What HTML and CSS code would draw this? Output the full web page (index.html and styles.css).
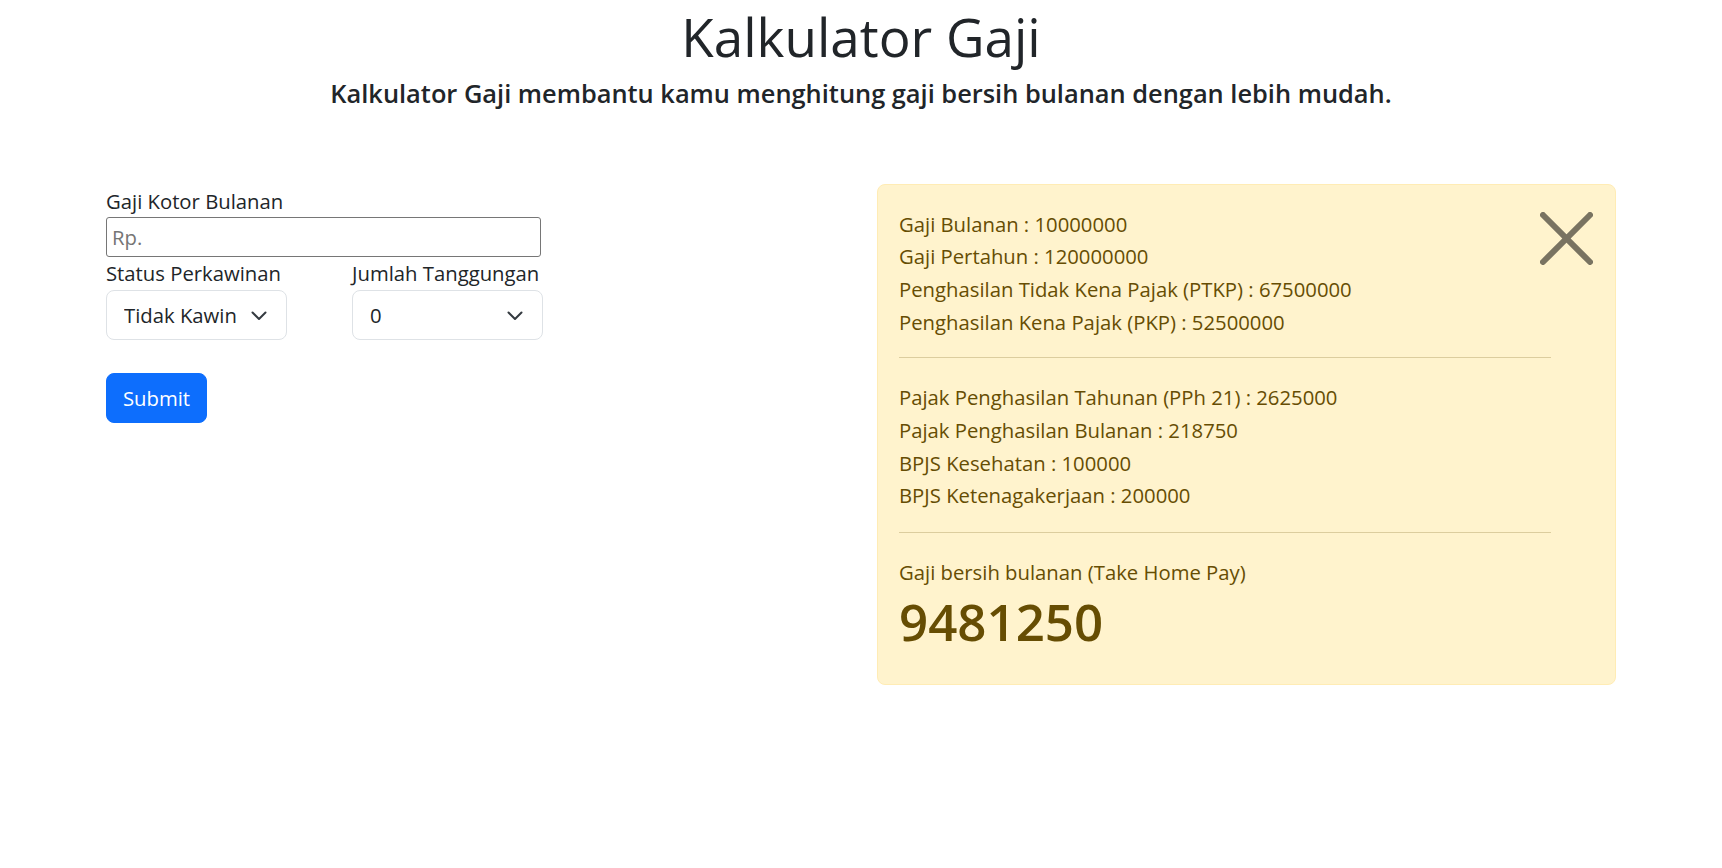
FILE: index.html
```html
<!DOCTYPE html>
<html lang="id">
<head>
<meta charset="utf-8">
<title>Kalkulator Gaji</title>
<link rel="stylesheet" href="styles.css">
</head>
<body>
  <header class="header">
    <h1 class="title">Kalkulator Gaji</h1>
    <h5 class="subtitle">Kalkulator Gaji membantu kamu menghitung gaji bersih bulanan dengan lebih mudah.</h5>
  </header>

  <main class="container">
    <section class="form-col">
      <form class="calc-form">
        <label class="label label-first" for="gaji">Gaji Kotor Bulanan</label>
        <input class="input" id="gaji" type="text" placeholder="Rp.">
        <div class="select-row">
          <div class="field field-status">
            <label class="label" for="status">Status Perkawinan</label>
            <div class="select-wrap">
              <select class="select" id="status">
                <option>Tidak Kawin</option>
                <option>Kawin</option>
              </select>
              <svg class="chevron" width="16" height="10" viewBox="0 0 16 10"><polyline points="1.5,1.5 8,8 14.5,1.5" fill="none" stroke="#343a40" stroke-width="2" stroke-linecap="round" stroke-linejoin="round"/></svg>
            </div>
          </div>
          <div class="field field-tanggungan">
            <label class="label" for="tanggungan">Jumlah Tanggungan</label>
            <div class="select-wrap">
              <select class="select" id="tanggungan">
                <option>0</option>
                <option>1</option>
                <option>2</option>
                <option>3</option>
              </select>
              <svg class="chevron" width="16" height="10" viewBox="0 0 16 10"><polyline points="1.5,1.5 8,8 14.5,1.5" fill="none" stroke="#343a40" stroke-width="2" stroke-linecap="round" stroke-linejoin="round"/></svg>
            </div>
          </div>
        </div>
        <button class="btn-submit" type="button">Submit</button>
      </form>
    </section>

    <section class="result-col">
      <div class="alert">
        <div class="line">Gaji Bulanan : 10000000</div>
        <div class="line">Gaji Pertahun : 120000000</div>
        <div class="line">Penghasilan Tidak Kena Pajak (PTKP) : 67500000</div>
        <div class="line">Penghasilan Kena Pajak (PKP) : 52500000</div>
        <hr class="divider">
        <div class="line">Pajak Penghasilan Tahunan (PPh 21) : 2625000</div>
        <div class="line">Pajak Penghasilan Bulanan : 218750</div>
        <div class="line">BPJS Kesehatan : 100000</div>
        <div class="line">BPJS Ketenagakerjaan : 200000</div>
        <hr class="divider divider-2">
        <div class="line">Gaji bersih bulanan (Take Home Pay)</div>
        <div class="total">9481250</div>
        <button class="btn-close" type="button" aria-label="Close">
          <svg width="53" height="53" viewBox="0 0 53 53"><path d="M3 3 L50 50 M50 3 L3 50" stroke="#000" stroke-width="6" stroke-linecap="round"/></svg>
        </button>
      </div>
    </section>
  </main>
</body>
</html>
```

FILE: styles.css
```css
* {
  box-sizing: border-box;
}

html, body {
  margin: 0;
  padding: 0;
  background: #ffffff;
}

body {
  font-family: "Open Sans", "Noto Sans", sans-serif;
  font-size: 20.3px;
  line-height: 32.7px;
  color: #212529;
}

.header {
  text-align: center;
}

.title {
  margin: 0;
  font-size: 53px;
  font-weight: 500;
  line-height: 73px;
  color: #212529;
}

.subtitle {
  margin: 5px 0 0;
  font-size: 25.4px;
  font-weight: 600;
  line-height: 30.5px;
  color: #212529;
}

.container {
  width: 1510px;
  margin: 75px auto 0;
  display: grid;
  grid-template-columns: 739px 739px;
  column-gap: 32px;
  align-items: start;
}

.form-col {
  padding-top: 2px;
}

.calc-form {
  display: flex;
  flex-direction: column;
  align-items: flex-start;
}

.label {
  display: block;
  line-height: 33px;
  color: #212529;
}

.label-first {
  line-height: 31px;
}

.input {
  width: 435px;
  height: 40px;
  border: 1px solid #767676;
  border-radius: 3px;
  padding: 0 5px;
  font-family: inherit;
  font-size: 20.3px;
  color: #212529;
  background: #fff;
}

.input::placeholder {
  color: #757575;
}

.select-row {
  display: flex;
  gap: 65px;
}

.field-status .select {
  width: 181px;
}

.field-tanggungan .select {
  width: 191px;
}

.select-wrap {
  position: relative;
}

.select {
  appearance: none;
  -webkit-appearance: none;
  display: block;
  height: 50px;
  padding: 0 40px 0 17px;
  border: 1px solid #dee2e6;
  border-radius: 8px;
  background: #fff;
  font-family: inherit;
  font-size: 20.3px;
  color: #212529;
}

.chevron {
  position: absolute;
  right: 20px;
  top: 21px;
  pointer-events: none;
}

.btn-submit {
  margin-top: 33px;
  width: 101px;
  height: 50px;
  border: 1px solid #0d6efd;
  border-radius: 8px;
  background: #0d6efd;
  color: #fff;
  font-family: inherit;
  font-size: 20.3px;
  padding: 0;
}

.alert {
  position: relative;
  height: 501px;
  background: #fff3cd;
  border: 1px solid #ffecb5;
  border-radius: 8px;
  padding: 23px 64px 0 21px;
  color: #664d03;
}

.line {
  line-height: 32.7px;
}

.divider {
  margin: 19px 0 23px;
  border: 0;
  height: 1px;
  background: #dccd9e;
}

.divider-2 {
  margin-top: 20px;
}

.total {
  margin-top: 2px;
  font-size: 51px;
  font-weight: 600;
  line-height: 60px;
  color: #664d03;
}

.btn-close {
  position: absolute;
  top: 27px;
  right: 22px;
  width: 53px;
  height: 53px;
  padding: 0;
  border: 0;
  background: transparent;
  opacity: 0.52;
  cursor: pointer;
}

.btn-close svg {
  display: block;
}
```
